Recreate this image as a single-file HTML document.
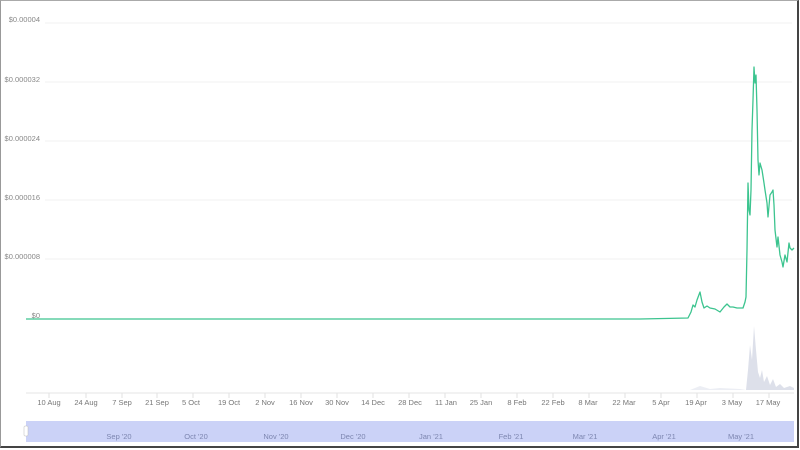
<!DOCTYPE html>
<html><head><meta charset="utf-8"><style>
html,body{margin:0;padding:0;background:#fff}
body{width:800px;height:450px;overflow:hidden;position:relative;font-family:"Liberation Sans",sans-serif}
.frame{position:absolute;left:0;top:0;width:796px;height:445px;border-top:1px solid #aaa;border-left:1px solid #999;border-right:2px solid #444;border-bottom:2px solid #444}
</style></head><body>
<div class="frame"></div>
<svg width="800" height="450" style="position:absolute;left:0;top:0" font-family="Liberation Sans, sans-serif">
<g stroke="#f2f2f2" stroke-width="1">
<line x1="45" y1="23" x2="792" y2="23"/><line x1="45" y1="82" x2="792" y2="82"/>
<line x1="45" y1="141" x2="792" y2="141"/><line x1="45" y1="200" x2="792" y2="200"/>
<line x1="45" y1="259" x2="792" y2="259"/>
</g>
<g font-size="7.5" fill="#888" text-anchor="end">
<text x="40" y="22">$0.00004</text><text x="40" y="82">$0.000032</text>
<text x="40" y="141">$0.000024</text><text x="40" y="200">$0.000016</text>
<text x="40" y="259">$0.000008</text><text x="40" y="318">$0</text>
</g>
<path d="M746,390 L748,370 L750,345 L752,360 L754,326 L756,350 L758,372 L760,378 L762,370 L764,382 L767,376 L770,385 L773,379 L776,387 L780,384 L784,388 L790,386 L794,388 L794,390 Z" fill="#dde0ea"/>
<path d="M690,390 L700,386 L710,389 L720,388 L740,389 L746,390Z" fill="#eceef4"/>
<line x1="26" y1="393" x2="794" y2="393" stroke="#e6e6e6"/>
<path d="M26,319 L640,319 L688,318 L691,312 L693,305 L695,307 L697,300 L700,292 L702,302 L704,308 L707,306 L710,308 L715,309 L720,312 L724,307 L727,304 L730,307 L733,307 L737,308 L743,308 L745,302 L746,297 L747,250 L748,183 L749,210 L750,215 L751,190 L752,130 L753,100 L754,67 L755,83 L756,75 L757,110 L758,160 L759,175 L760,163 L762,170 L764,183 L765,190 L767,203 L768,217 L770,195 L772,192 L773,190 L774,205 L775,230 L777,247 L778,237 L780,255 L782,262 L783,267 L785,255 L787,262 L789,243 L790,248 L792,250 L794,248" fill="none" stroke="#3cc48f" stroke-width="1.3" stroke-linejoin="round"/>
<g stroke="#e2e2e2"><line x1="49" y1="393" x2="49" y2="398"/><line x1="86" y1="393" x2="86" y2="398"/><line x1="122" y1="393" x2="122" y2="398"/><line x1="157" y1="393" x2="157" y2="398"/><line x1="193" y1="393" x2="193" y2="398"/><line x1="229" y1="393" x2="229" y2="398"/><line x1="265" y1="393" x2="265" y2="398"/><line x1="301" y1="393" x2="301" y2="398"/><line x1="337" y1="393" x2="337" y2="398"/><line x1="373" y1="393" x2="373" y2="398"/><line x1="409" y1="393" x2="409" y2="398"/><line x1="445" y1="393" x2="445" y2="398"/><line x1="481" y1="393" x2="481" y2="398"/><line x1="517" y1="393" x2="517" y2="398"/><line x1="553" y1="393" x2="553" y2="398"/><line x1="589" y1="393" x2="589" y2="398"/><line x1="625" y1="393" x2="625" y2="398"/><line x1="661" y1="393" x2="661" y2="398"/><line x1="697" y1="393" x2="697" y2="398"/><line x1="733" y1="393" x2="733" y2="398"/><line x1="769" y1="393" x2="769" y2="398"/></g>
<g font-size="7.5" fill="#777" text-anchor="middle">
<text x="49" y="405">10 Aug</text><text x="86" y="405">24 Aug</text><text x="122" y="405">7 Sep</text><text x="157" y="405">21 Sep</text><text x="191" y="405">5 Oct</text><text x="229" y="405">19 Oct</text><text x="265" y="405">2 Nov</text><text x="301" y="405">16 Nov</text><text x="337" y="405">30 Nov</text><text x="373" y="405">14 Dec</text><text x="410" y="405">28 Dec</text><text x="446" y="405">11 Jan</text><text x="481" y="405">25 Jan</text><text x="517" y="405">8 Feb</text><text x="553" y="405">22 Feb</text><text x="588" y="405">8 Mar</text><text x="624" y="405">22 Mar</text><text x="661" y="405">5 Apr</text><text x="696" y="405">19 Apr</text><text x="732" y="405">3 May</text><text x="768" y="405">17 May</text>
</g>
<rect x="26" y="421" width="768" height="21" fill="#cbd2f7"/>
<rect x="24" y="426" width="4" height="10" rx="1" fill="#fff" stroke="#bbb" stroke-width="0.5"/>
<g font-size="7.5" fill="#7d86b0" text-anchor="middle">
<text x="119" y="439">Sep '20</text><text x="196" y="439">Oct '20</text><text x="276" y="439">Nov '20</text><text x="353" y="439">Dec '20</text><text x="431" y="439">Jan '21</text><text x="511" y="439">Feb '21</text><text x="585" y="439">Mar '21</text><text x="664" y="439">Apr '21</text><text x="741" y="439">May '21</text>
</g>
</svg>
</body></html>
